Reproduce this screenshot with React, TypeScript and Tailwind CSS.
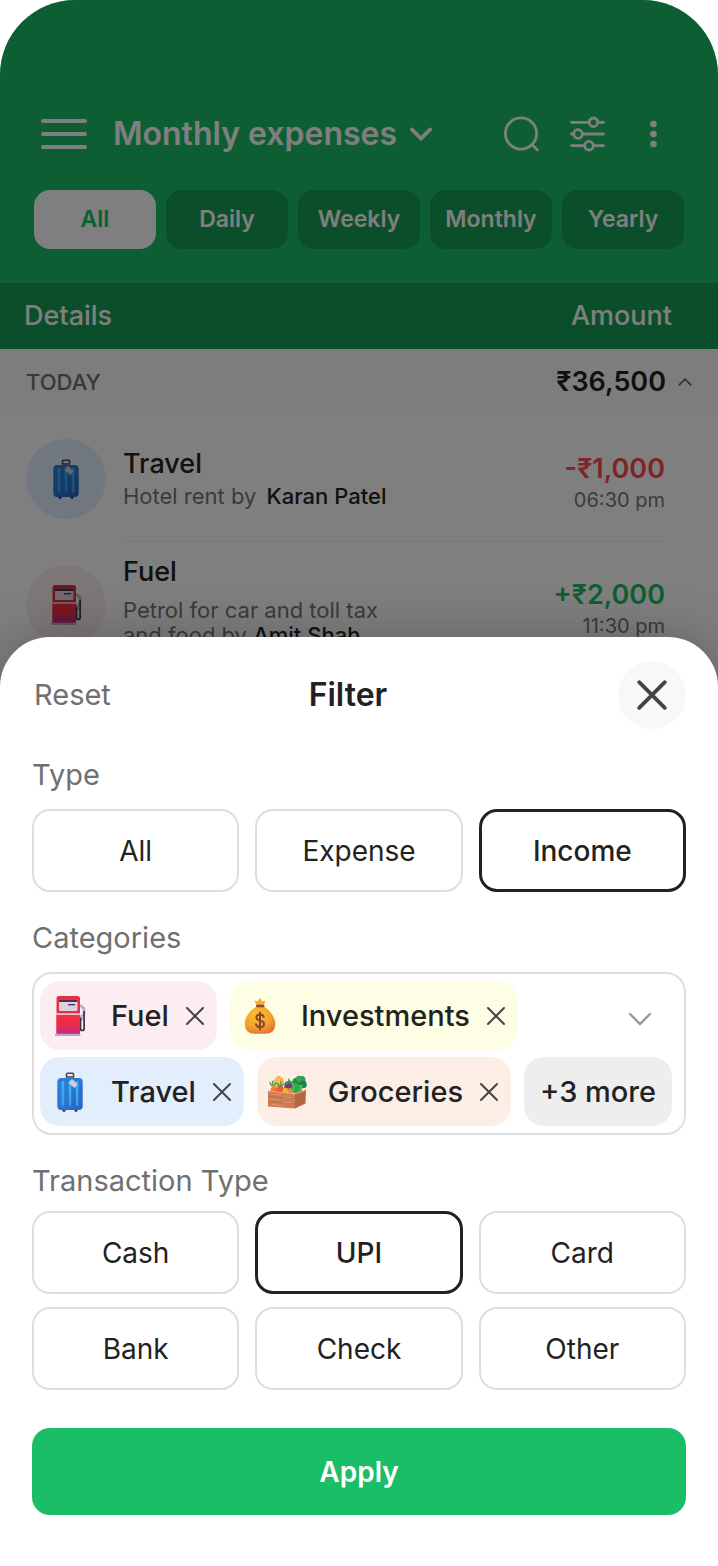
import { useState, type ReactNode } from "react";

function MenuIcon() {
  return (
    <svg className="h-8 w-12" viewBox="0 0 48 32" fill="none" stroke="currentColor" strokeWidth="4" strokeLinecap="round">
      <path d="M3 3h42M3 16h42M3 29h42" />
    </svg>
  );
}

function SearchIcon() {
  return (
    <svg className="size-9" viewBox="0 0 36 36" fill="none" stroke="currentColor" strokeWidth="2.8" strokeLinecap="round">
      <circle cx="17" cy="17.5" r="15.6" />
      <path d="M28 28.5l5.500 5.500" />
    </svg>
  );
}

function SlidersIcon() {
  return (
    <svg className="size-9" viewBox="0 0 36 36" fill="none" stroke="currentColor" strokeWidth="2.8" strokeLinecap="round">
      <path d="M1.500 6.3h17.500M27.500 6.3h6M1.500 18h2.500M12.500 18h21M1.500 29.7h13M23.500 29.7h10" />
      <circle cx="23.500" cy="6.300" r="4.300" />
      <circle cx="8" cy="18" r="4.300" />
      <circle cx="19" cy="29.700" r="4.300" />
    </svg>
  );
}

function DotsIcon() {
  return (
    <svg className="size-9" viewBox="0 0 36 36" fill="currentColor">
      <circle cx="17.500" cy="8" r="3.300" />
      <circle cx="17.500" cy="18" r="3.300" />
      <circle cx="17.500" cy="28" r="3.300" />
    </svg>
  );
}

function Chevron({ className, width, up = false }: { className: string; width: number; up?: boolean }) {
  return (
    <svg className={className} viewBox="0 0 24 14" fill="none" stroke="currentColor" strokeWidth={width} strokeLinecap="round">
      <path d={up ? "M2 12L12 2l10 10" : "M2 2l10 10L22 2"} />
    </svg>
  );
}

function Cross({ className, width }: { className: string; width: number }) {
  return (
    <svg className={className} viewBox="0 0 20 20" fill="none" stroke="currentColor" strokeWidth={width} strokeLinecap="round">
      <path d="M2 2l16 16M18 2L2 18" />
    </svg>
  );
}

function SuitcaseIcon() {
  return (
    <svg className="h-10 w-[26px]" viewBox="0 0 26 40">
      <defs>
        <linearGradient id="case-body" x1="0" y1="0" x2="1" y2="1">
          <stop offset="0" stopColor="#2b7fd8" />
          <stop offset="0.500" stopColor="#2878d0" />
          <stop offset="1" stopColor="#2c5fbd" />
        </linearGradient>
        <linearGradient id="case-rib" x1="0" y1="0" x2="0" y2="1">
          <stop offset="0" stopColor="#3fb4f2" />
          <stop offset="1" stopColor="#3a9bea" />
        </linearGradient>
      </defs>
      <path d="M9.500 5V2.200q0-1 1-1h5q1 0 1 1V5z" fill="none" stroke="#54405c" strokeWidth="1.600" />
      <rect x="5.500" y="37" width="3" height="2.800" rx="1" fill="#3b2b4a" />
      <rect x="17.500" y="37" width="3" height="2.800" rx="1" fill="#3b2b4a" />
      <rect x="0.300" y="6" width="25.400" height="32" rx="4" fill="url(#case-body)" />
      <rect x="4.600" y="9" width="2.600" height="25" rx="1.300" fill="url(#case-rib)" />
      <rect x="11.700" y="9" width="2.600" height="25" rx="1.300" fill="url(#case-rib)" />
      <rect x="18.800" y="9" width="2.600" height="25" rx="1.300" fill="url(#case-rib)" />
      <path d="M11.500 11l2.500-3.500 2 0 4.500 5-3 3.500z" fill="#d3cbda" />
    </svg>
  );
}

function FuelIcon() {
  return (
    <svg className="h-10 w-[31px]" viewBox="0 0 31 40">
      <defs>
        <linearGradient id="pump-base" x1="0" y1="0" x2="0" y2="1">
          <stop offset="0" stopColor="#f5303c" />
          <stop offset="0.550" stopColor="#e62c4b" />
          <stop offset="1" stopColor="#bf2c8c" />
        </linearGradient>
      </defs>
      <path d="M25 9l4 3.500v6L26.500 20v5" fill="none" stroke="#b9aec5" strokeWidth="2.600" strokeLinejoin="round" />
      <path d="M25.500 21.500v11q0 2 1.800 2t1.800-2V15" fill="none" stroke="#3e3040" strokeWidth="1.700" />
      <rect x="1.500" y="0" width="23.500" height="38.500" rx="2.500" fill="#e52f43" />
      <rect x="1.500" y="19" width="23.500" height="19.500" fill="url(#pump-base)" />
      <rect x="1.500" y="17.300" width="23.500" height="1.500" fill="#eadfe8" />
      <rect x="4" y="3.500" width="18.500" height="11.500" rx="1" fill="#ddd0df" />
      <path d="M4 6V4.500q0-1 1-1h16.500q1 0 1 1V6z" fill="#51304d" />
      <path d="M13 8.700h7" stroke="#40324e" strokeWidth="1.300" />
      <rect x="0" y="37.800" width="25.500" height="2.200" rx="0.800" fill="#b9a6c3" />
    </svg>
  );
}

function MoneyBagIcon() {
  return (
    <svg className="h-9 w-8" viewBox="0 0 32 36">
      <defs>
        <radialGradient id="bag" cx="0.400" cy="0.300" r="0.800">
          <stop offset="0" stopColor="#fdc02c" />
          <stop offset="0.600" stopColor="#f4a02b" />
          <stop offset="1" stopColor="#dc6b36" />
        </radialGradient>
      </defs>
      <path d="M13 8L10.500 2.700q2-.2 3.200.6L16 0l2.300 3.300q1.500-.9 3.200-.6L19.500 8z" fill="#f5aa31" />
      <path d="M12.500 8.500h7.500q8.500 5.500 11 14.500 1.800 12.500-9 12.800H10Q-.4 35.500 1 23q2.500-9 11.500-14.500z" fill="url(#bag)" />
      <rect x="12" y="6.800" width="8.500" height="2.500" rx="1.200" fill="#8c4a2c" />
      <path d="M19.700 19q-.8-2.500-3.700-2.500-3.600 0-3.600 2.800 0 2.500 3.600 3.200 4 .8 4 3.700 0 3-3.800 3-3.500 0-4.200-2.900M16 14.500v17" fill="none" stroke="#80492d" strokeWidth="2" strokeLinecap="round" />
    </svg>
  );
}

function GroceriesIcon() {
  return (
    <svg className="h-[34px] w-10" viewBox="0 0 40 34">
      <ellipse cx="12" cy="7" rx="4.800" ry="6" fill="#f5ae43" />
      <path d="M8 6l8 3M9 3l6 5M9 10l5-8" stroke="#ffd072" strokeWidth="1" />
      <circle cx="29.500" cy="7" r="4.200" fill="#248849" />
      <circle cx="34.500" cy="5" r="4" fill="#2f9955" />
      <circle cx="36" cy="9.500" r="3.800" fill="#1f8044" />
      <circle cx="32" cy="3.800" r="3" fill="#3aa35c" />
      <path d="M31 10h5l-2 9h-5z" fill="#55b658" />
      <path d="M3 18l1-5q3-4 6 0l3 4z" fill="#f47a35" />
      <path d="M8 17l3-6q4-2 6 2l1 5z" fill="#ee5b32" />
      <path d="M4.500 10.500L3 7.500M5.500 10.500L6 6M7 10.500l2-2.500M12 11l-2-3M13.500 10.500L14 7M14 11l3-2" stroke="#4ba344" strokeWidth="1.500" strokeLinecap="round" />
      <ellipse cx="21.500" cy="11.500" rx="4.200" ry="5.500" fill="#77358a" />
      <path d="M18 7l3-1 .5-3 2 3 3 1-3 2-2-1-2 2z" fill="#399b49" />
      <circle cx="18.500" cy="15.500" r="2.800" fill="#f7ad39" />
      <circle cx="23.500" cy="15.800" r="2.800" fill="#ef8b33" />
      <ellipse cx="28.500" cy="13" rx="4" ry="5.200" fill="#34a64d" />
      <path d="M27 9q-1.500 3-.5 7" stroke="#66ca64" strokeWidth="1" fill="none" />
      <path d="M1 16l27 3v14.500L1 31.500z" fill="#cf7c55" />
      <path d="M28 19l11-4-.5 13.500L28 33.500z" fill="#b9663f" />
      <path d="M1 16l27 3 11-4" fill="none" stroke="#e7a27c" strokeWidth="1.200" />
      <path d="M1 21.300l27 2.600 11-4.300M1 26.500l27 2.400 10.700-4.700" fill="none" stroke="#b06a45" strokeWidth="0.700" />
      <path d="M4 19l10 1M17 22l8 .8M4 24l8 .8M15 27l10 .9M5 29.500l9 .8" stroke="#e5a078" strokeWidth="0.700" />
    </svg>
  );
}

const periods = ["All", "Daily", "Weekly", "Monthly", "Yearly"];

function ExpenseScreen() {
  return (
    <div className="relative col-start-1 row-start-1 overflow-hidden rounded-t-[75px] bg-white">
      <header className="bg-[#1abe66] pt-[110px] pb-[34px] text-white">
        <div className="flex items-center pr-[46px] pl-10">
          <button type="button" aria-label="Menu"><MenuIcon /></button>
          <h1 className="ml-[25px]">
            <button type="button" className="flex items-center gap-[13px] text-[32px]/[48px] font-semibold">
              Monthly expenses
              <Chevron className="h-[14px] w-[22px]" width={4} />
            </button>
          </h1>
          <div className="ml-auto flex gap-[30px]">
            <button type="button" aria-label="Search"><SearchIcon /></button>
            <button type="button" aria-label="Filters"><SlidersIcon /></button>
            <button type="button" aria-label="More options"><DotsIcon /></button>
          </div>
        </div>
        <nav className="mt-8 grid grid-cols-5 gap-2.5 px-[34px]">
          {periods.map((p, i) => (
            <button
              key={p}
              type="button"
              className={i === 0
                ? "h-[59px] rounded-2xl bg-white text-[23px] font-semibold text-[#1abe66]"
                : "h-[59px] rounded-2xl bg-[#159e53] text-[23px] font-semibold"}
            >
              {p}
            </button>
          ))}
        </nav>
      </header>
      <div className="flex h-[66px] items-center justify-between bg-[#159e53] pr-[46px] pl-6 text-[27px] font-medium text-white">
        <span>Details</span>
        <span>Amount</span>
      </div>
      <div className="flex h-[67px] items-center justify-between border-b border-[#f4f4f4] bg-[#fafafa] px-[26px]">
        <span className="text-[22px] font-medium text-[#707070]">TODAY</span>
        <button type="button" className="flex items-center gap-3 text-[27px] font-semibold text-[#222222]">
          ₹36,500
          <Chevron className="h-2 w-[14px] text-[#666666]" width={3} up />
        </button>
      </div>
      <Transaction icon={<SuitcaseIcon />} tint="bg-[#e3eefc]" title="Travel" amount="-₹1,000" amountColor="text-[#ff4a4a]" time="06:30 pm">
        <p className="mt-1 text-[22px]/[25px] text-[#777777]">
          Hotel rent by <b className="ml-1 font-medium text-[#222222]">Karan Patel</b>
        </p>
      </Transaction>
      <Transaction icon={<FuelIcon />} tint="bg-[#fceeee]" title="Fuel" amount="+₹2,000" amountColor="text-[#1abe66]" time="11:30 pm">
        <p className="mt-2.5 max-w-[280px] pb-1.5 text-[22px]/[25px] text-[#777777]">
          Petrol for car and toll tax and food by <b className="font-medium text-[#222222]">Amit Shah</b>
        </p>
      </Transaction>
      <div className="absolute inset-0 bg-black/50" />
    </div>
  );
}

function Transaction(props: {
  icon: ReactNode;
  tint: string;
  title: string;
  amount: string;
  amountColor: string;
  time: string;
  children: ReactNode;
}) {
  return (
    <article className="flex items-center gap-[17px] pl-[26px]">
      <span className={`flex size-20 shrink-0 items-center justify-center rounded-full ${props.tint}`}>{props.icon}</span>
      <div className="mr-[53px] flex h-[126px] flex-1 items-center justify-between border-b border-[#f0f0f0]">
        <div>
          <h2 className="text-[27px]/[32px] font-medium text-[#222222]">{props.title}</h2>
          {props.children}
        </div>
        <div className="pt-2.5 text-right">
          <p className={`text-[27px]/[32px] font-semibold ${props.amountColor}`}>{props.amount}</p>
          <p className="text-[20px]/[30px] text-[#777777]">{props.time}</p>
        </div>
      </div>
    </article>
  );
}

function Options(props: { options: string[]; value: string; onChange: (v: string) => void; label: string }) {
  return (
    <div role="group" aria-label={props.label} className="grid grid-cols-3 gap-x-4 gap-y-[13px]">
      {props.options.map((o) => (
        <button
          key={o}
          type="button"
          aria-pressed={o === props.value}
          onClick={() => props.onChange(o)}
          className={o === props.value
            ? "h-[83px] rounded-[18px] border-[3px] border-[#222222] text-[28px] font-medium"
            : "h-[83px] rounded-[18px] border-2 border-[#dedede] text-[28px]"}
        >
          {o}
        </button>
      ))}
    </div>
  );
}

function Chip({ icon, label, tint }: { icon: ReactNode; label: string; tint: string }) {
  return (
    <span className={`flex h-[69px] items-center rounded-[20px] pr-3 pl-2.5 text-[29px] font-medium ${tint}`}>
      <span className="mr-[21px] flex w-10 justify-center">{icon}</span>
      {label}
      <button type="button" aria-label={`Remove ${label}`} className="ml-4 text-[#444444]">
        <Cross className="size-5" width={2} />
      </button>
    </span>
  );
}

function FilterSheet() {
  const [type, setType] = useState("Income");
  const [method, setMethod] = useState("UPI");
  return (
    <section
      aria-label="Filter"
      className="relative col-start-1 row-start-1 mt-[637px] rounded-t-[50px] bg-white px-8 pt-6 pb-[51px] text-[#222222] shadow-[0_0_50px_rgba(0,0,0,0.25)]"
    >
      <div className="grid grid-cols-3 items-center">
        <button type="button" className="justify-self-start pl-0.5 text-[29px] text-[#707070]">Reset</button>
        <h2 className="pr-[22px] text-center text-[32px] font-semibold">Filter</h2>
        <button type="button" aria-label="Close" className="flex size-[68px] items-center justify-center justify-self-end rounded-full bg-[#f8f8f8] text-[#444444]">
          <Cross className="size-8" width={2.4} />
        </button>
      </div>

      <h3 className="mt-7 mb-4 text-[29px]/[36px] text-[#707070]">Type</h3>
      <Options label="Type" options={["All", "Expense", "Income"]} value={type} onChange={setType} />

      <h3 className="mt-7 mb-4 text-[29px]/[36px] text-[#707070]">Categories</h3>
      <div className="flex flex-col gap-[7px] rounded-[20px] border-2 border-[#dedede] px-1.5 py-[7px]">
        <div className="flex items-center gap-[13px]">
          <Chip icon={<FuelIcon />} label="Fuel" tint="bg-[#fceef0]" />
          <Chip icon={<MoneyBagIcon />} label="Investments" tint="bg-[#fefee4]" />
          <button type="button" aria-label="Show categories" className="mt-1.5 mr-[26px] ml-auto text-[#999999]">
            <Chevron className="h-[14px] w-6" width={2.4} />
          </button>
        </div>
        <div className="flex gap-[13px]">
          <Chip icon={<SuitcaseIcon />} label="Travel" tint="bg-[#e3eefd]" />
          <Chip icon={<GroceriesIcon />} label="Groceries" tint="bg-[#fceee5]" />
          <button type="button" className="h-[69px] rounded-[20px] bg-[#eeeeee] px-4 text-[29px] font-medium whitespace-nowrap">+3 more</button>
        </div>
      </div>

      <h3 className="mt-7 mb-3 text-[29px]/[36px] text-[#707070]">Transaction Type</h3>
      <Options
        label="Transaction Type"
        options={["Cash", "UPI", "Card", "Bank", "Check", "Other"]}
        value={method}
        onChange={setMethod}
      />

      <button type="button" className="mt-[38px] h-[87px] w-full rounded-[18px] bg-[#1abe66] text-[28px] font-semibold text-white">Apply</button>
    </section>
  );
}

export default function App() {
  return (
    <main className="grid min-h-screen grid-cols-1 bg-white font-['Inter','Noto_Sans',sans-serif]">
      <ExpenseScreen />
      <FilterSheet />
    </main>
  );
}
